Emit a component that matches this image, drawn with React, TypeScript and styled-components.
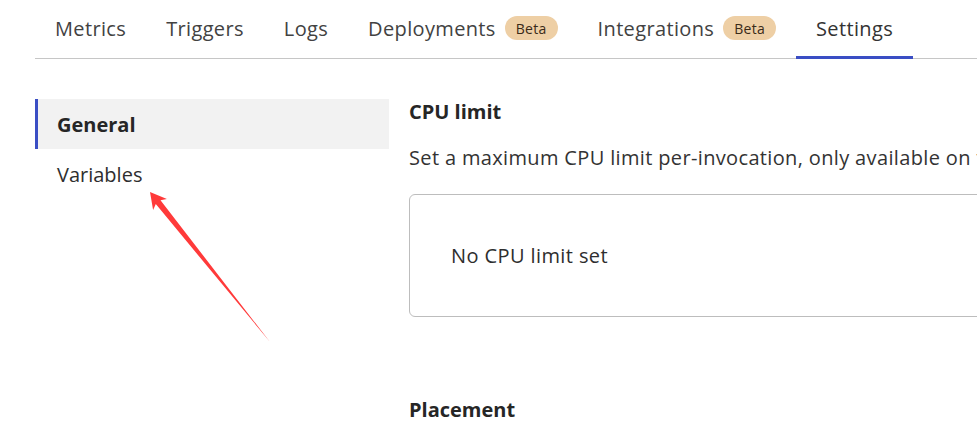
import React from "react";
import styled, { createGlobalStyle } from "styled-components";

const Global = createGlobalStyle`
  html, body { margin: 0; padding: 0; background: #ffffff; }
  body {
    font-family: "Open Sans", "Noto Sans", "Liberation Sans", sans-serif;
    color: #333333;
    overflow: hidden;
  }
`;

const Page = styled.div`
  position: relative;
  width: 977px;
  height: 441px;
  overflow: hidden;
`;

const Inner = styled.div`
  width: 1300px;
  padding-left: 35px;
  box-sizing: border-box;
`;

const TabBar = styled.nav`
  display: flex;
  height: 58px;
  border-bottom: 1px solid #c6c6c6;
`;

const Tab = styled.div<{ $active?: boolean }>`
  position: relative;
  display: flex;
  align-items: center;
  gap: 9px;
  padding: 0 20px 2px;
  font-size: 20px;
  letter-spacing: 0.35px;
  color: ${(p) => (p.$active ? "#333333" : "#424242")};
  &::after {
    content: "";
    display: ${(p) => (p.$active ? "block" : "none")};
    position: absolute;
    left: 0;
    right: 0;
    bottom: -1px;
    height: 3px;
    background: #3a4ec4;
  }
`;

const Badge = styled.span`
  display: inline-flex;
  align-items: center;
  height: 24px;
  padding: 0 11px;
  border-radius: 12px;
  background: #eecfa5;
  color: #3a2a18;
  font-size: 14px;
  letter-spacing: 0.3px;
`;

const Body = styled.div`
  display: flex;
  gap: 20px;
  padding-top: 40px;
`;

const Sidebar = styled.aside`
  display: flex;
  flex-direction: column;
  width: 354px;
  flex-shrink: 0;
`;

const SideItem = styled.div<{ $active?: boolean }>`
  display: flex;
  align-items: center;
  height: 50px;
  box-sizing: border-box;
  padding-left: ${(p) => (p.$active ? "19px" : "22px")};
  border-left: ${(p) => (p.$active ? "3px solid #3a4ec4" : "none")};
  background: ${(p) => (p.$active ? "#f2f2f2" : "transparent")};
  font-size: 20px;
  font-weight: ${(p) => (p.$active ? 700 : 400)};
  color: ${(p) => (p.$active ? "#262626" : "#2e2e2e")};
`;

const Main = styled.main`
  display: flex;
  flex-direction: column;
  flex: 1;
`;

const SectionTitle = styled.h2`
  margin: 0;
  font-size: 20px;
  line-height: 26px;
  font-weight: 700;
  color: #262626;
`;

const Description = styled.p`
  margin: 20px 0 0;
  font-size: 20px;
  line-height: 26px;
  letter-spacing: 0.35px;
  color: #333333;
  white-space: nowrap;
`;

const LimitBox = styled.div`
  display: flex;
  align-items: center;
  margin-top: 23px;
  height: 123px;
  box-sizing: border-box;
  padding-left: 41px;
  border: 1px solid #bdbdbd;
  border-radius: 6px;
  font-size: 20px;
  letter-spacing: 0.4px;
  color: #2e2e2e;
`;

const SecondTitle = styled(SectionTitle)`
  margin-top: 80px;
`;

const Annotation = styled.svg`
  position: absolute;
  left: 0;
  top: 0;
  pointer-events: none;
`;

export default function App() {
  return (
    <>
      <Global />
      <Page>
        <Inner>
          <TabBar>
            <Tab>Metrics</Tab>
            <Tab>Triggers</Tab>
            <Tab>Logs</Tab>
            <Tab>
              Deployments <Badge>Beta</Badge>
            </Tab>
            <Tab>
              Integrations <Badge>Beta</Badge>
            </Tab>
            <Tab $active>Settings</Tab>
          </TabBar>
          <Body>
            <Sidebar>
              <SideItem $active>General</SideItem>
              <SideItem>Variables</SideItem>
            </Sidebar>
            <Main>
              <SectionTitle>CPU limit</SectionTitle>
              <Description>
                Set a maximum CPU limit per-invocation, only available on the Workers Unbound usage model.
              </Description>
              <LimitBox>No CPU limit set</LimitBox>
              <SecondTitle>Placement</SecondTitle>
            </Main>
          </Body>
        </Inner>
        <Annotation width="977" height="441" viewBox="0 0 977 441">
          <polygon
            points="150,192 166.9,199 160.5,200.3 270,342 155.8,204.1 153.1,210"
            fill="#ff3a3a"
          />
        </Annotation>
      </Page>
    </>
  );
}
